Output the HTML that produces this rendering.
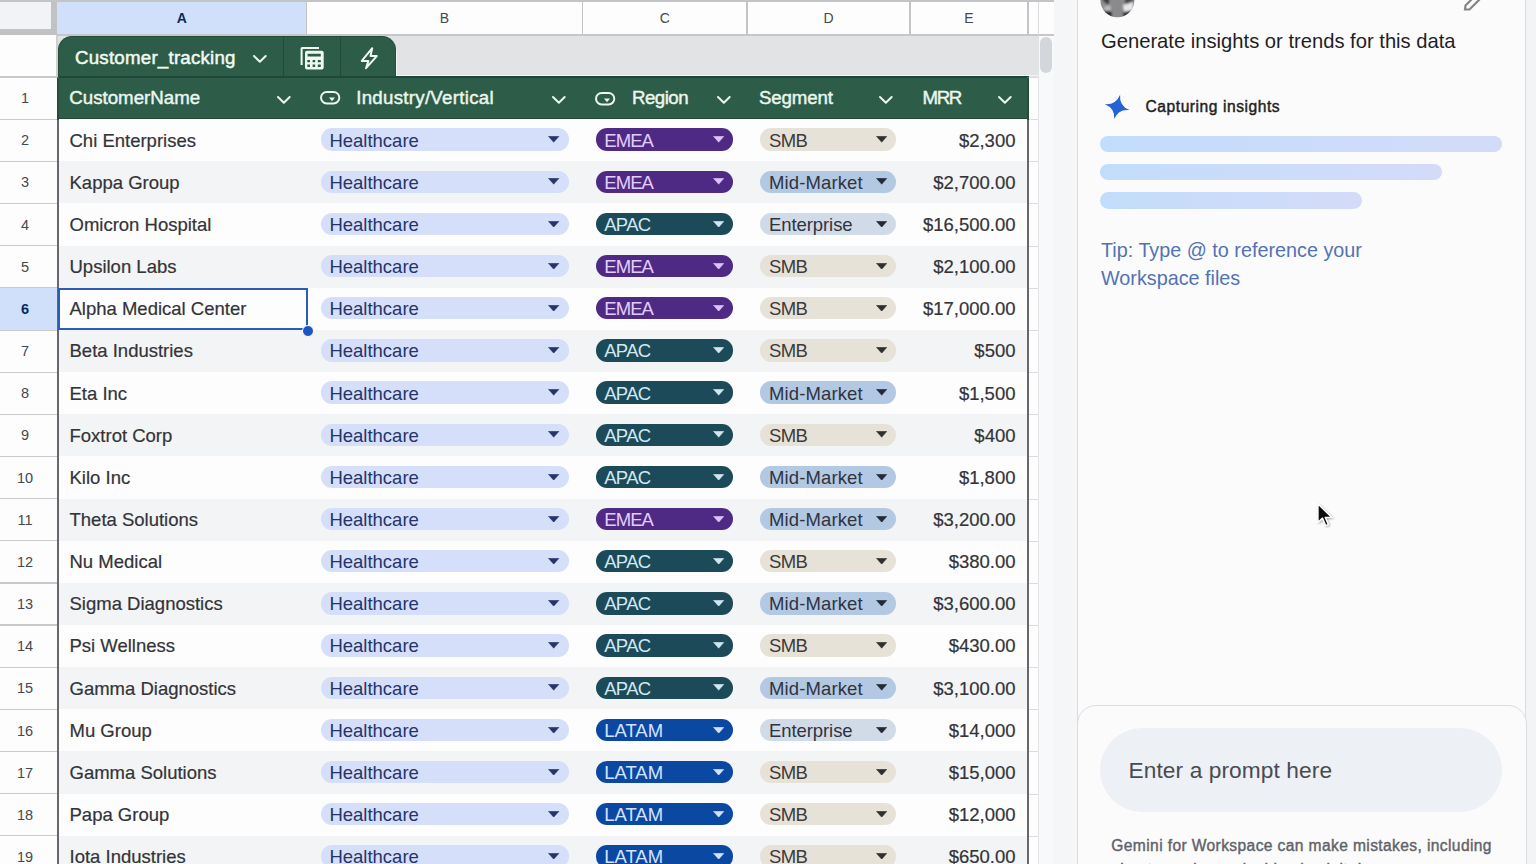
<!DOCTYPE html><html><head><meta charset='utf-8'><style>
*{box-sizing:border-box;margin:0;padding:0}
html,body{width:1536px;height:864px;overflow:hidden}
body{position:relative;background:#f3f4f6;font-family:"Liberation Sans",sans-serif;color:#3c4043}
.a{position:absolute}
.txt{position:absolute;white-space:nowrap;line-height:1}
</style></head><body>
<div class="a" style="left:0;top:0;width:1054px;height:864px;background:#fdfdfe"></div>
<div class="a" style="left:0;top:0;width:1054px;height:2px;background:#c3c4c7"></div>
<div class="a" style="left:57px;top:2px;width:250px;height:33px;background:#d0e0fb"></div>
<div class="a" style="left:0;top:2px;width:51px;height:27px;background:#f1f3f6"></div>
<div class="a" style="left:51px;top:2px;width:6px;height:33px;background:#c2c2c4"></div>
<div class="a" style="left:0;top:29px;width:57px;height:6px;background:#c2c2c4"></div>
<div class="a" style="left:57px;top:34px;width:997px;height:1.5px;background:#c7c7c9"></div>
<div class="a" style="left:305.75px;top:2px;width:1.5px;height:33px;background:#c4c4c6"></div>
<div class="a" style="left:581.75px;top:2px;width:1.5px;height:33px;background:#c4c4c6"></div>
<div class="a" style="left:746.25px;top:2px;width:1.5px;height:33px;background:#c4c4c6"></div>
<div class="a" style="left:909.25px;top:2px;width:1.5px;height:33px;background:#c4c4c6"></div>
<div class="a" style="left:1027.25px;top:2px;width:1.5px;height:33px;background:#c4c4c6"></div>
<div class="a" style="left:1037.5px;top:2px;width:1px;height:33px;background:#dcdcde"></div>
<div class="txt" style="left:161.75px;width:40px;text-align:center;top:11px;font-size:14px;font-weight:bold;color:#0b2b5c">A</div>
<div class="txt" style="left:424.5px;width:40px;text-align:center;top:11px;font-size:14px;font-weight:normal;color:#46484c">B</div>
<div class="txt" style="left:644.75px;width:40px;text-align:center;top:11px;font-size:14px;font-weight:normal;color:#46484c">C</div>
<div class="txt" style="left:808.5px;width:40px;text-align:center;top:11px;font-size:14px;font-weight:normal;color:#46484c">D</div>
<div class="txt" style="left:949px;width:40px;text-align:center;top:11px;font-size:14px;font-weight:normal;color:#46484c">E</div>
<div class="a" style="left:57px;top:35.5px;width:981px;height:41.5px;background:#e2e3e5"></div>
<div class="a" style="left:1037.5px;top:35.5px;width:16.5px;height:829px;background:#f8f9fa;border-left:1px solid #e3e3e5"></div>
<div class="a" style="left:1040px;top:37px;width:12px;height:36px;border-radius:6px;background:#d3d6da"></div>
<div class="a" style="left:1029px;top:76.90px;width:8.5px;height:1px;background:#dcdcde"></div>
<div class="a" style="left:1029px;top:119.06px;width:8.5px;height:1px;background:#dcdcde"></div>
<div class="a" style="left:1029px;top:161.22px;width:8.5px;height:1px;background:#dcdcde"></div>
<div class="a" style="left:1029px;top:203.38px;width:8.5px;height:1px;background:#dcdcde"></div>
<div class="a" style="left:1029px;top:245.54px;width:8.5px;height:1px;background:#dcdcde"></div>
<div class="a" style="left:1029px;top:287.70px;width:8.5px;height:1px;background:#dcdcde"></div>
<div class="a" style="left:1029px;top:329.86px;width:8.5px;height:1px;background:#dcdcde"></div>
<div class="a" style="left:1029px;top:372.02px;width:8.5px;height:1px;background:#dcdcde"></div>
<div class="a" style="left:1029px;top:414.18px;width:8.5px;height:1px;background:#dcdcde"></div>
<div class="a" style="left:1029px;top:456.34px;width:8.5px;height:1px;background:#dcdcde"></div>
<div class="a" style="left:1029px;top:498.50px;width:8.5px;height:1px;background:#dcdcde"></div>
<div class="a" style="left:1029px;top:540.66px;width:8.5px;height:1px;background:#dcdcde"></div>
<div class="a" style="left:1029px;top:582.82px;width:8.5px;height:1px;background:#dcdcde"></div>
<div class="a" style="left:1029px;top:624.98px;width:8.5px;height:1px;background:#dcdcde"></div>
<div class="a" style="left:1029px;top:667.14px;width:8.5px;height:1px;background:#dcdcde"></div>
<div class="a" style="left:1029px;top:709.30px;width:8.5px;height:1px;background:#dcdcde"></div>
<div class="a" style="left:1029px;top:751.46px;width:8.5px;height:1px;background:#dcdcde"></div>
<div class="a" style="left:1029px;top:793.62px;width:8.5px;height:1px;background:#dcdcde"></div>
<div class="a" style="left:1029px;top:835.78px;width:8.5px;height:1px;background:#dcdcde"></div>
<div class="a" style="left:1029px;top:877.94px;width:8.5px;height:1px;background:#dcdcde"></div>
<div class="a" style="left:0;top:76.40px;width:57px;height:1.2px;background:#c9c9cb"></div>
<div class="a" style="left:0;top:118.56px;width:57px;height:1.2px;background:#c9c9cb"></div>
<div class="a" style="left:0;top:160.72px;width:57px;height:1.2px;background:#c9c9cb"></div>
<div class="a" style="left:0;top:202.88px;width:57px;height:1.2px;background:#c9c9cb"></div>
<div class="a" style="left:0;top:245.04px;width:57px;height:1.2px;background:#c9c9cb"></div>
<div class="a" style="left:0;top:287.20px;width:57px;height:1.2px;background:#c9c9cb"></div>
<div class="a" style="left:0;top:329.36px;width:57px;height:1.2px;background:#c9c9cb"></div>
<div class="a" style="left:0;top:371.52px;width:57px;height:1.2px;background:#c9c9cb"></div>
<div class="a" style="left:0;top:413.68px;width:57px;height:1.2px;background:#c9c9cb"></div>
<div class="a" style="left:0;top:455.84px;width:57px;height:1.2px;background:#c9c9cb"></div>
<div class="a" style="left:0;top:498.00px;width:57px;height:1.2px;background:#c9c9cb"></div>
<div class="a" style="left:0;top:540.16px;width:57px;height:1.2px;background:#c9c9cb"></div>
<div class="a" style="left:0;top:582.32px;width:57px;height:1.2px;background:#c9c9cb"></div>
<div class="a" style="left:0;top:624.48px;width:57px;height:1.2px;background:#c9c9cb"></div>
<div class="a" style="left:0;top:666.64px;width:57px;height:1.2px;background:#c9c9cb"></div>
<div class="a" style="left:0;top:708.80px;width:57px;height:1.2px;background:#c9c9cb"></div>
<div class="a" style="left:0;top:750.96px;width:57px;height:1.2px;background:#c9c9cb"></div>
<div class="a" style="left:0;top:793.12px;width:57px;height:1.2px;background:#c9c9cb"></div>
<div class="a" style="left:0;top:835.28px;width:57px;height:1.2px;background:#c9c9cb"></div>
<div class="a" style="left:0;top:288.40px;width:57px;height:41.46px;background:#d0e0fb"></div>
<div class="txt" style="left:0;width:50px;text-align:center;top:91.10px;font-size:14.5px;font-weight:normal;color:#46484c">1</div>
<div class="txt" style="left:0;width:50px;text-align:center;top:133.26px;font-size:14.5px;font-weight:normal;color:#46484c">2</div>
<div class="txt" style="left:0;width:50px;text-align:center;top:175.42px;font-size:14.5px;font-weight:normal;color:#46484c">3</div>
<div class="txt" style="left:0;width:50px;text-align:center;top:217.58px;font-size:14.5px;font-weight:normal;color:#46484c">4</div>
<div class="txt" style="left:0;width:50px;text-align:center;top:259.74px;font-size:14.5px;font-weight:normal;color:#46484c">5</div>
<div class="txt" style="left:0;width:50px;text-align:center;top:301.90px;font-size:14.5px;font-weight:bold;color:#0b2b5c">6</div>
<div class="txt" style="left:0;width:50px;text-align:center;top:344.06px;font-size:14.5px;font-weight:normal;color:#46484c">7</div>
<div class="txt" style="left:0;width:50px;text-align:center;top:386.22px;font-size:14.5px;font-weight:normal;color:#46484c">8</div>
<div class="txt" style="left:0;width:50px;text-align:center;top:428.38px;font-size:14.5px;font-weight:normal;color:#46484c">9</div>
<div class="txt" style="left:0;width:50px;text-align:center;top:470.54px;font-size:14.5px;font-weight:normal;color:#46484c">10</div>
<div class="txt" style="left:0;width:50px;text-align:center;top:512.70px;font-size:14.5px;font-weight:normal;color:#46484c">11</div>
<div class="txt" style="left:0;width:50px;text-align:center;top:554.86px;font-size:14.5px;font-weight:normal;color:#46484c">12</div>
<div class="txt" style="left:0;width:50px;text-align:center;top:597.02px;font-size:14.5px;font-weight:normal;color:#46484c">13</div>
<div class="txt" style="left:0;width:50px;text-align:center;top:639.18px;font-size:14.5px;font-weight:normal;color:#46484c">14</div>
<div class="txt" style="left:0;width:50px;text-align:center;top:681.34px;font-size:14.5px;font-weight:normal;color:#46484c">15</div>
<div class="txt" style="left:0;width:50px;text-align:center;top:723.50px;font-size:14.5px;font-weight:normal;color:#46484c">16</div>
<div class="txt" style="left:0;width:50px;text-align:center;top:765.66px;font-size:14.5px;font-weight:normal;color:#46484c">17</div>
<div class="txt" style="left:0;width:50px;text-align:center;top:807.82px;font-size:14.5px;font-weight:normal;color:#46484c">18</div>
<div class="txt" style="left:0;width:50px;text-align:center;top:849.98px;font-size:14.5px;font-weight:normal;color:#46484c">19</div>
<div class="a" style="left:56.3px;top:35px;width:1.3px;height:42px;background:#cfd0d2"></div>
<div class="a" style="left:58px;top:35.5px;width:338px;height:42px;background:#2d5d48;border:1px solid #244d3b;border-bottom:none;border-radius:14px 14px 0 0"></div>
<div class="a" style="left:282.5px;top:36px;width:1px;height:41px;background:#234a39"></div>
<div class="a" style="left:340px;top:36px;width:1px;height:41px;background:#234a39"></div>
<div class="txt" style="left:75px;top:48.8px;font-size:18.7px;letter-spacing:0.23px;-webkit-text-stroke:0.5px #eefaf2;color:#eefaf2">Customer_tracking</div>
<svg class="a" style="left:253px;top:54.5px;overflow:visible" width="13.7" height="7.8" viewBox="0 0 13.7 7.8"><path d="M1 1 L6.85 6.8 L12.7 1" fill="none" stroke="#eaf6ee" stroke-width="2" stroke-linecap="round" stroke-linejoin="round"/></svg>
<svg class="a" style="left:299px;top:45px" width="26" height="26" viewBox="0 0 26 26">
<path d="M2.6 20 V3.5 Q2.6 3 3.1 3 H20" fill="none" stroke="#eefaf2" stroke-width="2"/>
<path fill-rule="evenodd" fill="#eefaf2" d="M8 5.8 H22.7 Q24.7 5.8 24.7 7.8 V22.5 Q24.7 24.5 22.7 24.5 H8 Q6 24.5 6 22.5 V7.8 Q6 5.8 8 5.8 Z M8.6 8.7 V11.6 H21.8 V8.7 Z M8.3 14.9 V17.2 H11 V14.9 Z M13.6 14.9 V17.2 H16.2 V14.9 Z M18.8 14.9 V17.2 H21.8 V14.9 Z M8.3 19.6 V21.9 H11 V19.6 Z M13.6 19.6 V21.9 H16.2 V19.6 Z M18.8 19.6 V21.9 H21.8 V19.6 Z"/>
</svg>
<svg class="a" style="left:359px;top:46px" width="21" height="24" viewBox="0 0 21 24" fill="none" stroke="#eefaf2" stroke-width="2" stroke-linejoin="round">
<path d="M13.2 2.2 L2.8 14.9 H9.4 L7 22.2 L17.8 10.1 H11.5 Z"/>
</svg>
<div class="a" style="left:396px;top:50px;width:1.2px;height:26px;background:#f4f6f5"></div>
<div class="a" style="left:396px;top:75px;width:642px;height:1.3px;background:#f4f6f5"></div>
<div class="a" style="left:58px;top:76.3px;width:971px;height:1.6px;background:#21473a"></div>
<div class="a" style="left:57px;top:77.90px;width:972px;height:41.66px;background:#2d5d48"></div>
<div class="a" style="left:57px;top:118.06px;width:972px;height:1px;background:#234a39"></div>
<div class="txt" style="left:69.3px;top:89.20px;font-size:18.7px;letter-spacing:0px;-webkit-text-stroke:0.45px #eaf6ee;color:#eaf6ee">CustomerName</div>
<div class="txt" style="left:356.2px;top:89.20px;font-size:18.7px;letter-spacing:0.28px;-webkit-text-stroke:0.45px #eaf6ee;color:#eaf6ee">Industry/Vertical</div>
<div class="txt" style="left:632px;top:89.20px;font-size:18.7px;letter-spacing:-0.54px;-webkit-text-stroke:0.45px #eaf6ee;color:#eaf6ee">Region</div>
<div class="txt" style="left:759px;top:89.20px;font-size:18.7px;letter-spacing:-0.14px;-webkit-text-stroke:0.45px #eaf6ee;color:#eaf6ee">Segment</div>
<div class="txt" style="left:922.5px;top:89.20px;font-size:18.7px;letter-spacing:-1.35px;-webkit-text-stroke:0.45px #eaf6ee;color:#eaf6ee">MRR</div>
<svg class="a" style="left:277.1px;top:95.8px;overflow:visible" width="13.7" height="7.8" viewBox="0 0 13.7 7.8"><path d="M1 1 L6.85 6.8 L12.7 1" fill="none" stroke="#eaf6ee" stroke-width="2" stroke-linecap="round" stroke-linejoin="round"/></svg>
<svg class="a" style="left:552px;top:95.8px;overflow:visible" width="13.7" height="7.8" viewBox="0 0 13.7 7.8"><path d="M1 1 L6.85 6.8 L12.7 1" fill="none" stroke="#eaf6ee" stroke-width="2" stroke-linecap="round" stroke-linejoin="round"/></svg>
<svg class="a" style="left:716.7px;top:95.8px;overflow:visible" width="13.7" height="7.8" viewBox="0 0 13.7 7.8"><path d="M1 1 L6.85 6.8 L12.7 1" fill="none" stroke="#eaf6ee" stroke-width="2" stroke-linecap="round" stroke-linejoin="round"/></svg>
<svg class="a" style="left:879.4px;top:95.8px;overflow:visible" width="13.7" height="7.8" viewBox="0 0 13.7 7.8"><path d="M1 1 L6.85 6.8 L12.7 1" fill="none" stroke="#eaf6ee" stroke-width="2" stroke-linecap="round" stroke-linejoin="round"/></svg>
<svg class="a" style="left:997.5px;top:95.8px;overflow:visible" width="13.7" height="7.8" viewBox="0 0 13.7 7.8"><path d="M1 1 L6.85 6.8 L12.7 1" fill="none" stroke="#eaf6ee" stroke-width="2" stroke-linecap="round" stroke-linejoin="round"/></svg>
<svg class="a" style="left:320.3px;top:91.4px;overflow:visible" width="20.3" height="13.4" viewBox="0 0 20.3 13.4" fill="none"><rect x="1" y="1" width="18.3" height="11.4" rx="5.7" stroke="#eaf6ee" stroke-width="2"/><path d="M9 6.6 H15 L12 10.2 Z" fill="#eaf6ee"/></svg>
<svg class="a" style="left:595.4px;top:91.9px;overflow:visible" width="20.3" height="13.4" viewBox="0 0 20.3 13.4" fill="none"><rect x="1" y="1" width="18.3" height="11.4" rx="5.7" stroke="#eaf6ee" stroke-width="2"/><path d="M9 6.6 H15 L12 10.2 Z" fill="#eaf6ee"/></svg>
<div class="a" style="left:59px;top:119.06px;width:968px;height:42.46px;background:#fdfdfe"></div>
<div class="a" style="left:59px;top:161.22px;width:968px;height:42.46px;background:#f3f4f6"></div>
<div class="a" style="left:59px;top:203.38px;width:968px;height:42.46px;background:#fdfdfe"></div>
<div class="a" style="left:59px;top:245.54px;width:968px;height:42.46px;background:#f3f4f6"></div>
<div class="a" style="left:59px;top:287.70px;width:968px;height:42.46px;background:#fdfdfe"></div>
<div class="a" style="left:59px;top:329.86px;width:968px;height:42.46px;background:#f3f4f6"></div>
<div class="a" style="left:59px;top:372.02px;width:968px;height:42.46px;background:#fdfdfe"></div>
<div class="a" style="left:59px;top:414.18px;width:968px;height:42.46px;background:#f3f4f6"></div>
<div class="a" style="left:59px;top:456.34px;width:968px;height:42.46px;background:#fdfdfe"></div>
<div class="a" style="left:59px;top:498.50px;width:968px;height:42.46px;background:#f3f4f6"></div>
<div class="a" style="left:59px;top:540.66px;width:968px;height:42.46px;background:#fdfdfe"></div>
<div class="a" style="left:59px;top:582.82px;width:968px;height:42.46px;background:#f3f4f6"></div>
<div class="a" style="left:59px;top:624.98px;width:968px;height:42.46px;background:#fdfdfe"></div>
<div class="a" style="left:59px;top:667.14px;width:968px;height:42.46px;background:#f3f4f6"></div>
<div class="a" style="left:59px;top:709.30px;width:968px;height:42.46px;background:#fdfdfe"></div>
<div class="a" style="left:59px;top:751.46px;width:968px;height:42.46px;background:#f3f4f6"></div>
<div class="a" style="left:59px;top:793.62px;width:968px;height:42.46px;background:#fdfdfe"></div>
<div class="a" style="left:59px;top:835.78px;width:968px;height:42.46px;background:#f3f4f6"></div>
<div class="a" style="left:57px;top:76.90px;width:2px;height:800px;background:#66686b"></div>
<div class="a" style="left:1027px;top:76.90px;width:2px;height:800px;background:#66686b"></div>
<div class="a" style="left:57px;top:77.90px;width:2px;height:41.66px;background:#244d3b"></div>
<div class="a" style="left:1027px;top:77.90px;width:2px;height:41.66px;background:#244d3b"></div>
<div class="txt" style="left:69.5px;top:131.56px;font-size:18.5px;-webkit-text-stroke:0.2px #333437;color:#333437">Chi Enterprises</div>
<div class="a" style="left:320.6px;top:128.46px;width:248px;height:22.4px;border-radius:11.2px;background:#d5dffa"></div>
<div class="txt" style="left:329.4px;top:131.56px;font-size:18.5px;color:#25346b">Healthcare</div>
<svg class="a" style="left:548.3px;top:136.26px" width="11.4" height="6.4" viewBox="0 0 11.4 6.4"><path d="M0.3 0.2 H11.1 L5.7 6.3 Z" fill="#25346b" stroke="#25346b" stroke-width="0.4" stroke-linejoin="round"/></svg>
<div class="a" style="left:596px;top:128.46px;width:137px;height:22.4px;border-radius:11.2px;background:#4f2a84"></div>
<div class="txt" style="left:604.2px;top:131.56px;font-size:18.5px;letter-spacing:-0.9px;color:#e3cdfb">EMEA</div>
<svg class="a" style="left:712.8px;top:136.26px" width="11.4" height="6.4" viewBox="0 0 11.4 6.4"><path d="M0.3 0.2 H11.1 L5.7 6.3 Z" fill="#dcc4fb" stroke="#dcc4fb" stroke-width="0.4" stroke-linejoin="round"/></svg>
<div class="a" style="left:760.2px;top:128.46px;width:136.2px;height:22.4px;border-radius:11.2px;background:#e7e2d8"></div>
<div class="txt" style="left:769px;top:131.56px;font-size:18.5px;letter-spacing:-0.66px;color:#3b3b3b">SMB</div>
<svg class="a" style="left:875.6px;top:136.26px" width="11.4" height="6.4" viewBox="0 0 11.4 6.4"><path d="M0.3 0.2 H11.1 L5.7 6.3 Z" fill="#2f2f2f" stroke="#2f2f2f" stroke-width="0.4" stroke-linejoin="round"/></svg>
<div class="txt" style="left:815px;width:200.5px;text-align:right;top:131.56px;font-size:18.5px;-webkit-text-stroke:0.2px #333437;color:#333437">$2,300</div>
<div class="txt" style="left:69.5px;top:173.72px;font-size:18.5px;-webkit-text-stroke:0.2px #333437;color:#333437">Kappa Group</div>
<div class="a" style="left:320.6px;top:170.62px;width:248px;height:22.4px;border-radius:11.2px;background:#d5dffa"></div>
<div class="txt" style="left:329.4px;top:173.72px;font-size:18.5px;color:#25346b">Healthcare</div>
<svg class="a" style="left:548.3px;top:178.42px" width="11.4" height="6.4" viewBox="0 0 11.4 6.4"><path d="M0.3 0.2 H11.1 L5.7 6.3 Z" fill="#25346b" stroke="#25346b" stroke-width="0.4" stroke-linejoin="round"/></svg>
<div class="a" style="left:596px;top:170.62px;width:137px;height:22.4px;border-radius:11.2px;background:#4f2a84"></div>
<div class="txt" style="left:604.2px;top:173.72px;font-size:18.5px;letter-spacing:-0.9px;color:#e3cdfb">EMEA</div>
<svg class="a" style="left:712.8px;top:178.42px" width="11.4" height="6.4" viewBox="0 0 11.4 6.4"><path d="M0.3 0.2 H11.1 L5.7 6.3 Z" fill="#dcc4fb" stroke="#dcc4fb" stroke-width="0.4" stroke-linejoin="round"/></svg>
<div class="a" style="left:760.2px;top:170.62px;width:136.2px;height:22.4px;border-radius:11.2px;background:#b3c8e2"></div>
<div class="txt" style="left:769px;top:173.72px;font-size:18.5px;letter-spacing:0.12px;color:#2f3440">Mid-Market</div>
<svg class="a" style="left:875.6px;top:178.42px" width="11.4" height="6.4" viewBox="0 0 11.4 6.4"><path d="M0.3 0.2 H11.1 L5.7 6.3 Z" fill="#232a36" stroke="#232a36" stroke-width="0.4" stroke-linejoin="round"/></svg>
<div class="txt" style="left:815px;width:200.5px;text-align:right;top:173.72px;font-size:18.5px;-webkit-text-stroke:0.2px #333437;color:#333437">$2,700.00</div>
<div class="txt" style="left:69.5px;top:215.88px;font-size:18.5px;-webkit-text-stroke:0.2px #333437;color:#333437">Omicron Hospital</div>
<div class="a" style="left:320.6px;top:212.78px;width:248px;height:22.4px;border-radius:11.2px;background:#d5dffa"></div>
<div class="txt" style="left:329.4px;top:215.88px;font-size:18.5px;color:#25346b">Healthcare</div>
<svg class="a" style="left:548.3px;top:220.57999999999998px" width="11.4" height="6.4" viewBox="0 0 11.4 6.4"><path d="M0.3 0.2 H11.1 L5.7 6.3 Z" fill="#25346b" stroke="#25346b" stroke-width="0.4" stroke-linejoin="round"/></svg>
<div class="a" style="left:596px;top:212.78px;width:137px;height:22.4px;border-radius:11.2px;background:#1d4a58"></div>
<div class="txt" style="left:604.2px;top:215.88px;font-size:18.5px;letter-spacing:-0.68px;color:#cfe9f2">APAC</div>
<svg class="a" style="left:712.8px;top:220.57999999999998px" width="11.4" height="6.4" viewBox="0 0 11.4 6.4"><path d="M0.3 0.2 H11.1 L5.7 6.3 Z" fill="#cfe9f2" stroke="#cfe9f2" stroke-width="0.4" stroke-linejoin="round"/></svg>
<div class="a" style="left:760.2px;top:212.78px;width:136.2px;height:22.4px;border-radius:11.2px;background:#d1dbe7"></div>
<div class="txt" style="left:769px;top:215.88px;font-size:18.5px;letter-spacing:-0.08px;color:#2f3440">Enterprise</div>
<svg class="a" style="left:875.6px;top:220.57999999999998px" width="11.4" height="6.4" viewBox="0 0 11.4 6.4"><path d="M0.3 0.2 H11.1 L5.7 6.3 Z" fill="#232a36" stroke="#232a36" stroke-width="0.4" stroke-linejoin="round"/></svg>
<div class="txt" style="left:815px;width:200.5px;text-align:right;top:215.88px;font-size:18.5px;-webkit-text-stroke:0.2px #333437;color:#333437">$16,500.00</div>
<div class="txt" style="left:69.5px;top:258.04px;font-size:18.5px;-webkit-text-stroke:0.2px #333437;color:#333437">Upsilon Labs</div>
<div class="a" style="left:320.6px;top:254.94px;width:248px;height:22.4px;border-radius:11.2px;background:#d5dffa"></div>
<div class="txt" style="left:329.4px;top:258.04px;font-size:18.5px;color:#25346b">Healthcare</div>
<svg class="a" style="left:548.3px;top:262.74px" width="11.4" height="6.4" viewBox="0 0 11.4 6.4"><path d="M0.3 0.2 H11.1 L5.7 6.3 Z" fill="#25346b" stroke="#25346b" stroke-width="0.4" stroke-linejoin="round"/></svg>
<div class="a" style="left:596px;top:254.94px;width:137px;height:22.4px;border-radius:11.2px;background:#4f2a84"></div>
<div class="txt" style="left:604.2px;top:258.04px;font-size:18.5px;letter-spacing:-0.9px;color:#e3cdfb">EMEA</div>
<svg class="a" style="left:712.8px;top:262.74px" width="11.4" height="6.4" viewBox="0 0 11.4 6.4"><path d="M0.3 0.2 H11.1 L5.7 6.3 Z" fill="#dcc4fb" stroke="#dcc4fb" stroke-width="0.4" stroke-linejoin="round"/></svg>
<div class="a" style="left:760.2px;top:254.94px;width:136.2px;height:22.4px;border-radius:11.2px;background:#e7e2d8"></div>
<div class="txt" style="left:769px;top:258.04px;font-size:18.5px;letter-spacing:-0.66px;color:#3b3b3b">SMB</div>
<svg class="a" style="left:875.6px;top:262.74px" width="11.4" height="6.4" viewBox="0 0 11.4 6.4"><path d="M0.3 0.2 H11.1 L5.7 6.3 Z" fill="#2f2f2f" stroke="#2f2f2f" stroke-width="0.4" stroke-linejoin="round"/></svg>
<div class="txt" style="left:815px;width:200.5px;text-align:right;top:258.04px;font-size:18.5px;-webkit-text-stroke:0.2px #333437;color:#333437">$2,100.00</div>
<div class="txt" style="left:69.5px;top:300.20px;font-size:18.5px;-webkit-text-stroke:0.2px #333437;color:#333437">Alpha Medical Center</div>
<div class="a" style="left:320.6px;top:297.10px;width:248px;height:22.4px;border-radius:11.2px;background:#d5dffa"></div>
<div class="txt" style="left:329.4px;top:300.20px;font-size:18.5px;color:#25346b">Healthcare</div>
<svg class="a" style="left:548.3px;top:304.9px" width="11.4" height="6.4" viewBox="0 0 11.4 6.4"><path d="M0.3 0.2 H11.1 L5.7 6.3 Z" fill="#25346b" stroke="#25346b" stroke-width="0.4" stroke-linejoin="round"/></svg>
<div class="a" style="left:596px;top:297.10px;width:137px;height:22.4px;border-radius:11.2px;background:#4f2a84"></div>
<div class="txt" style="left:604.2px;top:300.20px;font-size:18.5px;letter-spacing:-0.9px;color:#e3cdfb">EMEA</div>
<svg class="a" style="left:712.8px;top:304.9px" width="11.4" height="6.4" viewBox="0 0 11.4 6.4"><path d="M0.3 0.2 H11.1 L5.7 6.3 Z" fill="#dcc4fb" stroke="#dcc4fb" stroke-width="0.4" stroke-linejoin="round"/></svg>
<div class="a" style="left:760.2px;top:297.10px;width:136.2px;height:22.4px;border-radius:11.2px;background:#e7e2d8"></div>
<div class="txt" style="left:769px;top:300.20px;font-size:18.5px;letter-spacing:-0.66px;color:#3b3b3b">SMB</div>
<svg class="a" style="left:875.6px;top:304.9px" width="11.4" height="6.4" viewBox="0 0 11.4 6.4"><path d="M0.3 0.2 H11.1 L5.7 6.3 Z" fill="#2f2f2f" stroke="#2f2f2f" stroke-width="0.4" stroke-linejoin="round"/></svg>
<div class="txt" style="left:815px;width:200.5px;text-align:right;top:300.20px;font-size:18.5px;-webkit-text-stroke:0.2px #333437;color:#333437">$17,000.00</div>
<div class="txt" style="left:69.5px;top:342.36px;font-size:18.5px;-webkit-text-stroke:0.2px #333437;color:#333437">Beta Industries</div>
<div class="a" style="left:320.6px;top:339.26px;width:248px;height:22.4px;border-radius:11.2px;background:#d5dffa"></div>
<div class="txt" style="left:329.4px;top:342.36px;font-size:18.5px;color:#25346b">Healthcare</div>
<svg class="a" style="left:548.3px;top:347.06px" width="11.4" height="6.4" viewBox="0 0 11.4 6.4"><path d="M0.3 0.2 H11.1 L5.7 6.3 Z" fill="#25346b" stroke="#25346b" stroke-width="0.4" stroke-linejoin="round"/></svg>
<div class="a" style="left:596px;top:339.26px;width:137px;height:22.4px;border-radius:11.2px;background:#1d4a58"></div>
<div class="txt" style="left:604.2px;top:342.36px;font-size:18.5px;letter-spacing:-0.68px;color:#cfe9f2">APAC</div>
<svg class="a" style="left:712.8px;top:347.06px" width="11.4" height="6.4" viewBox="0 0 11.4 6.4"><path d="M0.3 0.2 H11.1 L5.7 6.3 Z" fill="#cfe9f2" stroke="#cfe9f2" stroke-width="0.4" stroke-linejoin="round"/></svg>
<div class="a" style="left:760.2px;top:339.26px;width:136.2px;height:22.4px;border-radius:11.2px;background:#e7e2d8"></div>
<div class="txt" style="left:769px;top:342.36px;font-size:18.5px;letter-spacing:-0.66px;color:#3b3b3b">SMB</div>
<svg class="a" style="left:875.6px;top:347.06px" width="11.4" height="6.4" viewBox="0 0 11.4 6.4"><path d="M0.3 0.2 H11.1 L5.7 6.3 Z" fill="#2f2f2f" stroke="#2f2f2f" stroke-width="0.4" stroke-linejoin="round"/></svg>
<div class="txt" style="left:815px;width:200.5px;text-align:right;top:342.36px;font-size:18.5px;-webkit-text-stroke:0.2px #333437;color:#333437">$500</div>
<div class="txt" style="left:69.5px;top:384.52px;font-size:18.5px;-webkit-text-stroke:0.2px #333437;color:#333437">Eta Inc</div>
<div class="a" style="left:320.6px;top:381.42px;width:248px;height:22.4px;border-radius:11.2px;background:#d5dffa"></div>
<div class="txt" style="left:329.4px;top:384.52px;font-size:18.5px;color:#25346b">Healthcare</div>
<svg class="a" style="left:548.3px;top:389.21999999999997px" width="11.4" height="6.4" viewBox="0 0 11.4 6.4"><path d="M0.3 0.2 H11.1 L5.7 6.3 Z" fill="#25346b" stroke="#25346b" stroke-width="0.4" stroke-linejoin="round"/></svg>
<div class="a" style="left:596px;top:381.42px;width:137px;height:22.4px;border-radius:11.2px;background:#1d4a58"></div>
<div class="txt" style="left:604.2px;top:384.52px;font-size:18.5px;letter-spacing:-0.68px;color:#cfe9f2">APAC</div>
<svg class="a" style="left:712.8px;top:389.21999999999997px" width="11.4" height="6.4" viewBox="0 0 11.4 6.4"><path d="M0.3 0.2 H11.1 L5.7 6.3 Z" fill="#cfe9f2" stroke="#cfe9f2" stroke-width="0.4" stroke-linejoin="round"/></svg>
<div class="a" style="left:760.2px;top:381.42px;width:136.2px;height:22.4px;border-radius:11.2px;background:#b3c8e2"></div>
<div class="txt" style="left:769px;top:384.52px;font-size:18.5px;letter-spacing:0.12px;color:#2f3440">Mid-Market</div>
<svg class="a" style="left:875.6px;top:389.21999999999997px" width="11.4" height="6.4" viewBox="0 0 11.4 6.4"><path d="M0.3 0.2 H11.1 L5.7 6.3 Z" fill="#232a36" stroke="#232a36" stroke-width="0.4" stroke-linejoin="round"/></svg>
<div class="txt" style="left:815px;width:200.5px;text-align:right;top:384.52px;font-size:18.5px;-webkit-text-stroke:0.2px #333437;color:#333437">$1,500</div>
<div class="txt" style="left:69.5px;top:426.68px;font-size:18.5px;-webkit-text-stroke:0.2px #333437;color:#333437">Foxtrot Corp</div>
<div class="a" style="left:320.6px;top:423.58px;width:248px;height:22.4px;border-radius:11.2px;background:#d5dffa"></div>
<div class="txt" style="left:329.4px;top:426.68px;font-size:18.5px;color:#25346b">Healthcare</div>
<svg class="a" style="left:548.3px;top:431.37999999999994px" width="11.4" height="6.4" viewBox="0 0 11.4 6.4"><path d="M0.3 0.2 H11.1 L5.7 6.3 Z" fill="#25346b" stroke="#25346b" stroke-width="0.4" stroke-linejoin="round"/></svg>
<div class="a" style="left:596px;top:423.58px;width:137px;height:22.4px;border-radius:11.2px;background:#1d4a58"></div>
<div class="txt" style="left:604.2px;top:426.68px;font-size:18.5px;letter-spacing:-0.68px;color:#cfe9f2">APAC</div>
<svg class="a" style="left:712.8px;top:431.37999999999994px" width="11.4" height="6.4" viewBox="0 0 11.4 6.4"><path d="M0.3 0.2 H11.1 L5.7 6.3 Z" fill="#cfe9f2" stroke="#cfe9f2" stroke-width="0.4" stroke-linejoin="round"/></svg>
<div class="a" style="left:760.2px;top:423.58px;width:136.2px;height:22.4px;border-radius:11.2px;background:#e7e2d8"></div>
<div class="txt" style="left:769px;top:426.68px;font-size:18.5px;letter-spacing:-0.66px;color:#3b3b3b">SMB</div>
<svg class="a" style="left:875.6px;top:431.37999999999994px" width="11.4" height="6.4" viewBox="0 0 11.4 6.4"><path d="M0.3 0.2 H11.1 L5.7 6.3 Z" fill="#2f2f2f" stroke="#2f2f2f" stroke-width="0.4" stroke-linejoin="round"/></svg>
<div class="txt" style="left:815px;width:200.5px;text-align:right;top:426.68px;font-size:18.5px;-webkit-text-stroke:0.2px #333437;color:#333437">$400</div>
<div class="txt" style="left:69.5px;top:468.84px;font-size:18.5px;-webkit-text-stroke:0.2px #333437;color:#333437">Kilo Inc</div>
<div class="a" style="left:320.6px;top:465.74px;width:248px;height:22.4px;border-radius:11.2px;background:#d5dffa"></div>
<div class="txt" style="left:329.4px;top:468.84px;font-size:18.5px;color:#25346b">Healthcare</div>
<svg class="a" style="left:548.3px;top:473.5399999999999px" width="11.4" height="6.4" viewBox="0 0 11.4 6.4"><path d="M0.3 0.2 H11.1 L5.7 6.3 Z" fill="#25346b" stroke="#25346b" stroke-width="0.4" stroke-linejoin="round"/></svg>
<div class="a" style="left:596px;top:465.74px;width:137px;height:22.4px;border-radius:11.2px;background:#1d4a58"></div>
<div class="txt" style="left:604.2px;top:468.84px;font-size:18.5px;letter-spacing:-0.68px;color:#cfe9f2">APAC</div>
<svg class="a" style="left:712.8px;top:473.5399999999999px" width="11.4" height="6.4" viewBox="0 0 11.4 6.4"><path d="M0.3 0.2 H11.1 L5.7 6.3 Z" fill="#cfe9f2" stroke="#cfe9f2" stroke-width="0.4" stroke-linejoin="round"/></svg>
<div class="a" style="left:760.2px;top:465.74px;width:136.2px;height:22.4px;border-radius:11.2px;background:#b3c8e2"></div>
<div class="txt" style="left:769px;top:468.84px;font-size:18.5px;letter-spacing:0.12px;color:#2f3440">Mid-Market</div>
<svg class="a" style="left:875.6px;top:473.5399999999999px" width="11.4" height="6.4" viewBox="0 0 11.4 6.4"><path d="M0.3 0.2 H11.1 L5.7 6.3 Z" fill="#232a36" stroke="#232a36" stroke-width="0.4" stroke-linejoin="round"/></svg>
<div class="txt" style="left:815px;width:200.5px;text-align:right;top:468.84px;font-size:18.5px;-webkit-text-stroke:0.2px #333437;color:#333437">$1,800</div>
<div class="txt" style="left:69.5px;top:511.00px;font-size:18.5px;-webkit-text-stroke:0.2px #333437;color:#333437">Theta Solutions</div>
<div class="a" style="left:320.6px;top:507.90px;width:248px;height:22.4px;border-radius:11.2px;background:#d5dffa"></div>
<div class="txt" style="left:329.4px;top:511.00px;font-size:18.5px;color:#25346b">Healthcare</div>
<svg class="a" style="left:548.3px;top:515.7px" width="11.4" height="6.4" viewBox="0 0 11.4 6.4"><path d="M0.3 0.2 H11.1 L5.7 6.3 Z" fill="#25346b" stroke="#25346b" stroke-width="0.4" stroke-linejoin="round"/></svg>
<div class="a" style="left:596px;top:507.90px;width:137px;height:22.4px;border-radius:11.2px;background:#4f2a84"></div>
<div class="txt" style="left:604.2px;top:511.00px;font-size:18.5px;letter-spacing:-0.9px;color:#e3cdfb">EMEA</div>
<svg class="a" style="left:712.8px;top:515.7px" width="11.4" height="6.4" viewBox="0 0 11.4 6.4"><path d="M0.3 0.2 H11.1 L5.7 6.3 Z" fill="#dcc4fb" stroke="#dcc4fb" stroke-width="0.4" stroke-linejoin="round"/></svg>
<div class="a" style="left:760.2px;top:507.90px;width:136.2px;height:22.4px;border-radius:11.2px;background:#b3c8e2"></div>
<div class="txt" style="left:769px;top:511.00px;font-size:18.5px;letter-spacing:0.12px;color:#2f3440">Mid-Market</div>
<svg class="a" style="left:875.6px;top:515.7px" width="11.4" height="6.4" viewBox="0 0 11.4 6.4"><path d="M0.3 0.2 H11.1 L5.7 6.3 Z" fill="#232a36" stroke="#232a36" stroke-width="0.4" stroke-linejoin="round"/></svg>
<div class="txt" style="left:815px;width:200.5px;text-align:right;top:511.00px;font-size:18.5px;-webkit-text-stroke:0.2px #333437;color:#333437">$3,200.00</div>
<div class="txt" style="left:69.5px;top:553.16px;font-size:18.5px;-webkit-text-stroke:0.2px #333437;color:#333437">Nu Medical</div>
<div class="a" style="left:320.6px;top:550.06px;width:248px;height:22.4px;border-radius:11.2px;background:#d5dffa"></div>
<div class="txt" style="left:329.4px;top:553.16px;font-size:18.5px;color:#25346b">Healthcare</div>
<svg class="a" style="left:548.3px;top:557.86px" width="11.4" height="6.4" viewBox="0 0 11.4 6.4"><path d="M0.3 0.2 H11.1 L5.7 6.3 Z" fill="#25346b" stroke="#25346b" stroke-width="0.4" stroke-linejoin="round"/></svg>
<div class="a" style="left:596px;top:550.06px;width:137px;height:22.4px;border-radius:11.2px;background:#1d4a58"></div>
<div class="txt" style="left:604.2px;top:553.16px;font-size:18.5px;letter-spacing:-0.68px;color:#cfe9f2">APAC</div>
<svg class="a" style="left:712.8px;top:557.86px" width="11.4" height="6.4" viewBox="0 0 11.4 6.4"><path d="M0.3 0.2 H11.1 L5.7 6.3 Z" fill="#cfe9f2" stroke="#cfe9f2" stroke-width="0.4" stroke-linejoin="round"/></svg>
<div class="a" style="left:760.2px;top:550.06px;width:136.2px;height:22.4px;border-radius:11.2px;background:#e7e2d8"></div>
<div class="txt" style="left:769px;top:553.16px;font-size:18.5px;letter-spacing:-0.66px;color:#3b3b3b">SMB</div>
<svg class="a" style="left:875.6px;top:557.86px" width="11.4" height="6.4" viewBox="0 0 11.4 6.4"><path d="M0.3 0.2 H11.1 L5.7 6.3 Z" fill="#2f2f2f" stroke="#2f2f2f" stroke-width="0.4" stroke-linejoin="round"/></svg>
<div class="txt" style="left:815px;width:200.5px;text-align:right;top:553.16px;font-size:18.5px;-webkit-text-stroke:0.2px #333437;color:#333437">$380.00</div>
<div class="txt" style="left:69.5px;top:595.32px;font-size:18.5px;-webkit-text-stroke:0.2px #333437;color:#333437">Sigma Diagnostics</div>
<div class="a" style="left:320.6px;top:592.22px;width:248px;height:22.4px;border-radius:11.2px;background:#d5dffa"></div>
<div class="txt" style="left:329.4px;top:595.32px;font-size:18.5px;color:#25346b">Healthcare</div>
<svg class="a" style="left:548.3px;top:600.02px" width="11.4" height="6.4" viewBox="0 0 11.4 6.4"><path d="M0.3 0.2 H11.1 L5.7 6.3 Z" fill="#25346b" stroke="#25346b" stroke-width="0.4" stroke-linejoin="round"/></svg>
<div class="a" style="left:596px;top:592.22px;width:137px;height:22.4px;border-radius:11.2px;background:#1d4a58"></div>
<div class="txt" style="left:604.2px;top:595.32px;font-size:18.5px;letter-spacing:-0.68px;color:#cfe9f2">APAC</div>
<svg class="a" style="left:712.8px;top:600.02px" width="11.4" height="6.4" viewBox="0 0 11.4 6.4"><path d="M0.3 0.2 H11.1 L5.7 6.3 Z" fill="#cfe9f2" stroke="#cfe9f2" stroke-width="0.4" stroke-linejoin="round"/></svg>
<div class="a" style="left:760.2px;top:592.22px;width:136.2px;height:22.4px;border-radius:11.2px;background:#b3c8e2"></div>
<div class="txt" style="left:769px;top:595.32px;font-size:18.5px;letter-spacing:0.12px;color:#2f3440">Mid-Market</div>
<svg class="a" style="left:875.6px;top:600.02px" width="11.4" height="6.4" viewBox="0 0 11.4 6.4"><path d="M0.3 0.2 H11.1 L5.7 6.3 Z" fill="#232a36" stroke="#232a36" stroke-width="0.4" stroke-linejoin="round"/></svg>
<div class="txt" style="left:815px;width:200.5px;text-align:right;top:595.32px;font-size:18.5px;-webkit-text-stroke:0.2px #333437;color:#333437">$3,600.00</div>
<div class="txt" style="left:69.5px;top:637.48px;font-size:18.5px;-webkit-text-stroke:0.2px #333437;color:#333437">Psi Wellness</div>
<div class="a" style="left:320.6px;top:634.38px;width:248px;height:22.4px;border-radius:11.2px;background:#d5dffa"></div>
<div class="txt" style="left:329.4px;top:637.48px;font-size:18.5px;color:#25346b">Healthcare</div>
<svg class="a" style="left:548.3px;top:642.18px" width="11.4" height="6.4" viewBox="0 0 11.4 6.4"><path d="M0.3 0.2 H11.1 L5.7 6.3 Z" fill="#25346b" stroke="#25346b" stroke-width="0.4" stroke-linejoin="round"/></svg>
<div class="a" style="left:596px;top:634.38px;width:137px;height:22.4px;border-radius:11.2px;background:#1d4a58"></div>
<div class="txt" style="left:604.2px;top:637.48px;font-size:18.5px;letter-spacing:-0.68px;color:#cfe9f2">APAC</div>
<svg class="a" style="left:712.8px;top:642.18px" width="11.4" height="6.4" viewBox="0 0 11.4 6.4"><path d="M0.3 0.2 H11.1 L5.7 6.3 Z" fill="#cfe9f2" stroke="#cfe9f2" stroke-width="0.4" stroke-linejoin="round"/></svg>
<div class="a" style="left:760.2px;top:634.38px;width:136.2px;height:22.4px;border-radius:11.2px;background:#e7e2d8"></div>
<div class="txt" style="left:769px;top:637.48px;font-size:18.5px;letter-spacing:-0.66px;color:#3b3b3b">SMB</div>
<svg class="a" style="left:875.6px;top:642.18px" width="11.4" height="6.4" viewBox="0 0 11.4 6.4"><path d="M0.3 0.2 H11.1 L5.7 6.3 Z" fill="#2f2f2f" stroke="#2f2f2f" stroke-width="0.4" stroke-linejoin="round"/></svg>
<div class="txt" style="left:815px;width:200.5px;text-align:right;top:637.48px;font-size:18.5px;-webkit-text-stroke:0.2px #333437;color:#333437">$430.00</div>
<div class="txt" style="left:69.5px;top:679.64px;font-size:18.5px;-webkit-text-stroke:0.2px #333437;color:#333437">Gamma Diagnostics</div>
<div class="a" style="left:320.6px;top:676.54px;width:248px;height:22.4px;border-radius:11.2px;background:#d5dffa"></div>
<div class="txt" style="left:329.4px;top:679.64px;font-size:18.5px;color:#25346b">Healthcare</div>
<svg class="a" style="left:548.3px;top:684.34px" width="11.4" height="6.4" viewBox="0 0 11.4 6.4"><path d="M0.3 0.2 H11.1 L5.7 6.3 Z" fill="#25346b" stroke="#25346b" stroke-width="0.4" stroke-linejoin="round"/></svg>
<div class="a" style="left:596px;top:676.54px;width:137px;height:22.4px;border-radius:11.2px;background:#1d4a58"></div>
<div class="txt" style="left:604.2px;top:679.64px;font-size:18.5px;letter-spacing:-0.68px;color:#cfe9f2">APAC</div>
<svg class="a" style="left:712.8px;top:684.34px" width="11.4" height="6.4" viewBox="0 0 11.4 6.4"><path d="M0.3 0.2 H11.1 L5.7 6.3 Z" fill="#cfe9f2" stroke="#cfe9f2" stroke-width="0.4" stroke-linejoin="round"/></svg>
<div class="a" style="left:760.2px;top:676.54px;width:136.2px;height:22.4px;border-radius:11.2px;background:#b3c8e2"></div>
<div class="txt" style="left:769px;top:679.64px;font-size:18.5px;letter-spacing:0.12px;color:#2f3440">Mid-Market</div>
<svg class="a" style="left:875.6px;top:684.34px" width="11.4" height="6.4" viewBox="0 0 11.4 6.4"><path d="M0.3 0.2 H11.1 L5.7 6.3 Z" fill="#232a36" stroke="#232a36" stroke-width="0.4" stroke-linejoin="round"/></svg>
<div class="txt" style="left:815px;width:200.5px;text-align:right;top:679.64px;font-size:18.5px;-webkit-text-stroke:0.2px #333437;color:#333437">$3,100.00</div>
<div class="txt" style="left:69.5px;top:721.80px;font-size:18.5px;-webkit-text-stroke:0.2px #333437;color:#333437">Mu Group</div>
<div class="a" style="left:320.6px;top:718.70px;width:248px;height:22.4px;border-radius:11.2px;background:#d5dffa"></div>
<div class="txt" style="left:329.4px;top:721.80px;font-size:18.5px;color:#25346b">Healthcare</div>
<svg class="a" style="left:548.3px;top:726.5px" width="11.4" height="6.4" viewBox="0 0 11.4 6.4"><path d="M0.3 0.2 H11.1 L5.7 6.3 Z" fill="#25346b" stroke="#25346b" stroke-width="0.4" stroke-linejoin="round"/></svg>
<div class="a" style="left:596px;top:718.70px;width:137px;height:22.4px;border-radius:11.2px;background:#0b48a2"></div>
<div class="txt" style="left:604.2px;top:721.80px;font-size:18.5px;letter-spacing:0px;color:#d3e3ff">LATAM</div>
<svg class="a" style="left:712.8px;top:726.5px" width="11.4" height="6.4" viewBox="0 0 11.4 6.4"><path d="M0.3 0.2 H11.1 L5.7 6.3 Z" fill="#d3e3ff" stroke="#d3e3ff" stroke-width="0.4" stroke-linejoin="round"/></svg>
<div class="a" style="left:760.2px;top:718.70px;width:136.2px;height:22.4px;border-radius:11.2px;background:#d1dbe7"></div>
<div class="txt" style="left:769px;top:721.80px;font-size:18.5px;letter-spacing:-0.08px;color:#2f3440">Enterprise</div>
<svg class="a" style="left:875.6px;top:726.5px" width="11.4" height="6.4" viewBox="0 0 11.4 6.4"><path d="M0.3 0.2 H11.1 L5.7 6.3 Z" fill="#232a36" stroke="#232a36" stroke-width="0.4" stroke-linejoin="round"/></svg>
<div class="txt" style="left:815px;width:200.5px;text-align:right;top:721.80px;font-size:18.5px;-webkit-text-stroke:0.2px #333437;color:#333437">$14,000</div>
<div class="txt" style="left:69.5px;top:763.96px;font-size:18.5px;-webkit-text-stroke:0.2px #333437;color:#333437">Gamma Solutions</div>
<div class="a" style="left:320.6px;top:760.86px;width:248px;height:22.4px;border-radius:11.2px;background:#d5dffa"></div>
<div class="txt" style="left:329.4px;top:763.96px;font-size:18.5px;color:#25346b">Healthcare</div>
<svg class="a" style="left:548.3px;top:768.66px" width="11.4" height="6.4" viewBox="0 0 11.4 6.4"><path d="M0.3 0.2 H11.1 L5.7 6.3 Z" fill="#25346b" stroke="#25346b" stroke-width="0.4" stroke-linejoin="round"/></svg>
<div class="a" style="left:596px;top:760.86px;width:137px;height:22.4px;border-radius:11.2px;background:#0b48a2"></div>
<div class="txt" style="left:604.2px;top:763.96px;font-size:18.5px;letter-spacing:0px;color:#d3e3ff">LATAM</div>
<svg class="a" style="left:712.8px;top:768.66px" width="11.4" height="6.4" viewBox="0 0 11.4 6.4"><path d="M0.3 0.2 H11.1 L5.7 6.3 Z" fill="#d3e3ff" stroke="#d3e3ff" stroke-width="0.4" stroke-linejoin="round"/></svg>
<div class="a" style="left:760.2px;top:760.86px;width:136.2px;height:22.4px;border-radius:11.2px;background:#e7e2d8"></div>
<div class="txt" style="left:769px;top:763.96px;font-size:18.5px;letter-spacing:-0.66px;color:#3b3b3b">SMB</div>
<svg class="a" style="left:875.6px;top:768.66px" width="11.4" height="6.4" viewBox="0 0 11.4 6.4"><path d="M0.3 0.2 H11.1 L5.7 6.3 Z" fill="#2f2f2f" stroke="#2f2f2f" stroke-width="0.4" stroke-linejoin="round"/></svg>
<div class="txt" style="left:815px;width:200.5px;text-align:right;top:763.96px;font-size:18.5px;-webkit-text-stroke:0.2px #333437;color:#333437">$15,000</div>
<div class="txt" style="left:69.5px;top:806.12px;font-size:18.5px;-webkit-text-stroke:0.2px #333437;color:#333437">Papa Group</div>
<div class="a" style="left:320.6px;top:803.02px;width:248px;height:22.4px;border-radius:11.2px;background:#d5dffa"></div>
<div class="txt" style="left:329.4px;top:806.12px;font-size:18.5px;color:#25346b">Healthcare</div>
<svg class="a" style="left:548.3px;top:810.8199999999999px" width="11.4" height="6.4" viewBox="0 0 11.4 6.4"><path d="M0.3 0.2 H11.1 L5.7 6.3 Z" fill="#25346b" stroke="#25346b" stroke-width="0.4" stroke-linejoin="round"/></svg>
<div class="a" style="left:596px;top:803.02px;width:137px;height:22.4px;border-radius:11.2px;background:#0b48a2"></div>
<div class="txt" style="left:604.2px;top:806.12px;font-size:18.5px;letter-spacing:0px;color:#d3e3ff">LATAM</div>
<svg class="a" style="left:712.8px;top:810.8199999999999px" width="11.4" height="6.4" viewBox="0 0 11.4 6.4"><path d="M0.3 0.2 H11.1 L5.7 6.3 Z" fill="#d3e3ff" stroke="#d3e3ff" stroke-width="0.4" stroke-linejoin="round"/></svg>
<div class="a" style="left:760.2px;top:803.02px;width:136.2px;height:22.4px;border-radius:11.2px;background:#e7e2d8"></div>
<div class="txt" style="left:769px;top:806.12px;font-size:18.5px;letter-spacing:-0.66px;color:#3b3b3b">SMB</div>
<svg class="a" style="left:875.6px;top:810.8199999999999px" width="11.4" height="6.4" viewBox="0 0 11.4 6.4"><path d="M0.3 0.2 H11.1 L5.7 6.3 Z" fill="#2f2f2f" stroke="#2f2f2f" stroke-width="0.4" stroke-linejoin="round"/></svg>
<div class="txt" style="left:815px;width:200.5px;text-align:right;top:806.12px;font-size:18.5px;-webkit-text-stroke:0.2px #333437;color:#333437">$12,000</div>
<div class="txt" style="left:69.5px;top:848.28px;font-size:18.5px;-webkit-text-stroke:0.2px #333437;color:#333437">Iota Industries</div>
<div class="a" style="left:320.6px;top:845.18px;width:248px;height:22.4px;border-radius:11.2px;background:#d5dffa"></div>
<div class="txt" style="left:329.4px;top:848.28px;font-size:18.5px;color:#25346b">Healthcare</div>
<svg class="a" style="left:548.3px;top:852.9799999999999px" width="11.4" height="6.4" viewBox="0 0 11.4 6.4"><path d="M0.3 0.2 H11.1 L5.7 6.3 Z" fill="#25346b" stroke="#25346b" stroke-width="0.4" stroke-linejoin="round"/></svg>
<div class="a" style="left:596px;top:845.18px;width:137px;height:22.4px;border-radius:11.2px;background:#0b48a2"></div>
<div class="txt" style="left:604.2px;top:848.28px;font-size:18.5px;letter-spacing:0px;color:#d3e3ff">LATAM</div>
<svg class="a" style="left:712.8px;top:852.9799999999999px" width="11.4" height="6.4" viewBox="0 0 11.4 6.4"><path d="M0.3 0.2 H11.1 L5.7 6.3 Z" fill="#d3e3ff" stroke="#d3e3ff" stroke-width="0.4" stroke-linejoin="round"/></svg>
<div class="a" style="left:760.2px;top:845.18px;width:136.2px;height:22.4px;border-radius:11.2px;background:#e7e2d8"></div>
<div class="txt" style="left:769px;top:848.28px;font-size:18.5px;letter-spacing:-0.66px;color:#3b3b3b">SMB</div>
<svg class="a" style="left:875.6px;top:852.9799999999999px" width="11.4" height="6.4" viewBox="0 0 11.4 6.4"><path d="M0.3 0.2 H11.1 L5.7 6.3 Z" fill="#2f2f2f" stroke="#2f2f2f" stroke-width="0.4" stroke-linejoin="round"/></svg>
<div class="txt" style="left:815px;width:200.5px;text-align:right;top:848.28px;font-size:18.5px;-webkit-text-stroke:0.2px #333437;color:#333437">$650.00</div>
<div class="a" style="left:58px;top:287.70px;width:250px;height:42.16px;border:2px solid #2b5cb8"></div>
<div class="a" style="left:301.6px;top:324.56px;width:12px;height:12px;border-radius:6px;background:#1c55c4;border:1px solid #fff"></div>
<div class="a" style="left:1054px;top:0;width:23px;height:864px;background:#f5f6f8"></div>
<div class="a" style="left:1076.5px;top:0;width:449.5px;height:864px;background:#fcfbfc;border-left:1px solid #dadce0;border-right:1px solid #dadce0"></div>
<svg class="a" style="left:1100px;top:-17px" width="35" height="35" viewBox="0 0 35 35"><defs><clipPath id="cp"><circle cx="17.4" cy="17.2" r="17"/></clipPath><filter id="bl" x="-20%" y="-20%" width="140%" height="140%"><feGaussianBlur stdDeviation="1.1"/></filter></defs>
<g clip-path="url(#cp)"><rect width="35" height="35" fill="#8e8e90"/>
<g filter="url(#bl)">
<rect x="0" y="0" width="35" height="14" fill="#a9a9ab"/>
<path d="M2 0 H9 V22 Q5 20 3 17 Z" fill="#3a3a3c"/>
<path d="M25 0 H33 V18 Q29 22 25 21 Z" fill="#48484a"/>
<rect x="11" y="8" width="13" height="26" rx="4" fill="#8a8a8c"/>
<path d="M4 27 L12 29 L12 35 H4 Z" fill="#2a2a2c"/>
<path d="M23 28 L31 25 L31 33 L23 35 Z" fill="#2e2e30"/>
<path d="M23 22 L33 19 L33 27 L24 29 Z" fill="#e6e6e8"/>
<path d="M4 24 L10 22 L11 27 L5 28 Z" fill="#bdbdbf"/>
</g></g></svg>
<svg class="a" style="left:1461.5px;top:-7px" width="20" height="20" viewBox="0 0 20 20" fill="none" stroke="#858587" stroke-width="2.2"><path d="M3 16.5 L3.5 12.5 L14 2 L18 6 L7.5 16.5 Z"/></svg>
<div class="txt" style="left:1101px;top:31.2px;font-size:20.2px;color:#1f1f1f">Generate insights or trends for this data</div>
<svg class="a" style="left:1100px;top:90px" width="36" height="34" viewBox="0 0 36 34"><path d="M20.1 4.7 Q19.0 15.85 29.5 20.1 Q18.3 18.9 14.2 29.1 Q15.2 18.2 4.7 14.2 Q15.9 15.1 20.1 4.7 Z" fill="#2462d8"/></svg>
<div class="txt" style="left:1145.5px;top:99px;font-size:15.6px;letter-spacing:0.55px;-webkit-text-stroke:0.45px #1f1f1f;color:#1f1f1f">Capturing insights</div>
<div class="a" style="left:1100px;top:135.6px;width:402px;height:16.8px;border-radius:8.4px;background:linear-gradient(90deg,#c2ddfb,#d4dbf8)"></div>
<div class="a" style="left:1100px;top:163.7px;width:341.70000000000005px;height:16.8px;border-radius:8.4px;background:linear-gradient(90deg,#c2ddfb,#d4dbf8)"></div>
<div class="a" style="left:1100px;top:191.9px;width:261.5px;height:16.8px;border-radius:8.4px;background:linear-gradient(90deg,#c2ddfb,#d4dbf8)"></div>
<div class="txt" style="left:1101px;top:237.4px;font-size:19.8px;line-height:27.6px;color:#5173b3;white-space:normal;width:300px">Tip: Type @ to reference your Workspace files</div>
<div class="a" style="left:1076.5px;top:705px;width:450px;height:200px;border:1px solid #dcdde0;border-radius:19px 19px 0 0;background:#fcfbfc"></div>
<div class="a" style="left:1100.2px;top:728.3px;width:402px;height:84px;border-radius:42px;background:#edf0f5"></div>
<div class="txt" style="left:1128.5px;top:758.5px;font-size:22.7px;letter-spacing:0.1px;color:#484b50">Enter a prompt here</div>
<div class="txt" style="left:1111.3px;top:838px;font-size:15.6px;letter-spacing:0.38px;-webkit-text-stroke:0.4px #5f6368;color:#5f6368">Gemini for Workspace can make mistakes, including</div>
<div class="txt" style="left:1111.3px;top:861.5px;font-size:15.6px;letter-spacing:0.38px;-webkit-text-stroke:0.4px #5f6368;color:#5f6368">about people, so double-check it. Learn more</div>
<svg class="a" style="left:1314.6px;top:500.9px;overflow:visible" width="22" height="30" viewBox="0 0 22 30"><defs><filter id="sh" x="-50%" y="-50%" width="200%" height="200%"><feGaussianBlur in="SourceAlpha" stdDeviation="0.9"/><feOffset dx="0.6" dy="1.2"/><feComponentTransfer><feFuncA type="linear" slope="0.35"/></feComponentTransfer><feMerge><feMergeNode/><feMergeNode in="SourceGraphic"/></feMerge></filter></defs><path filter="url(#sh)" d="M3 3 V21.2 L7.5 17.1 L10.7 24.5 L13.3 23.4 L10.2 16.4 H16.6 Z" fill="#111" stroke="#fff" stroke-width="1.3" stroke-linejoin="round"/></svg>
</body></html>
